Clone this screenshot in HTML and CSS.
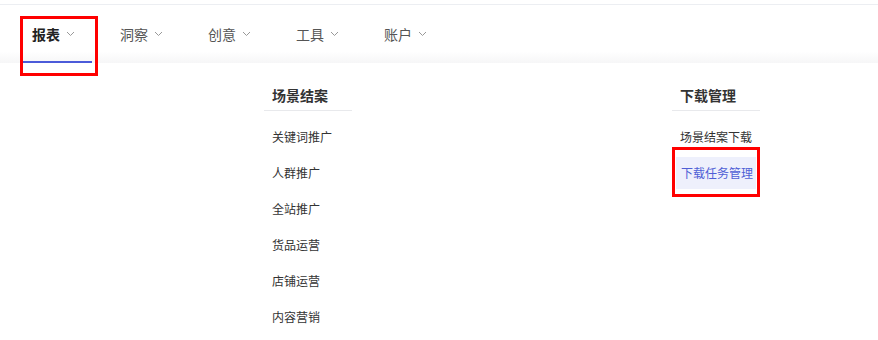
FILE: index.html
```html
<!DOCTYPE html>
<html lang="zh-CN">
<head>
  <meta charset="UTF-8">
  <meta name="viewport" content="width=device-width, initial-scale=1.0">
  <title>报表</title>
  <link rel="stylesheet" href="styles.css">
</head>
<body>

<div class="topline"></div>

<div class="nav">
  <div class="nav-item active">
    <span>报表</span>
    <svg class="arrow" width="9" height="6" viewBox="0 0 9 6"><path d="M1 1l3.5 3.5L8 1" fill="none" stroke="#999" stroke-width="1"/></svg>
    <span class="mark mark-nav"></span>
  </div>
  <div class="nav-item">
    <span>洞察</span>
    <svg class="arrow" width="9" height="6" viewBox="0 0 9 6"><path d="M1 1l3.5 3.5L8 1" fill="none" stroke="#999" stroke-width="1"/></svg>
  </div>
  <div class="nav-item">
    <span>创意</span>
    <svg class="arrow" width="9" height="6" viewBox="0 0 9 6"><path d="M1 1l3.5 3.5L8 1" fill="none" stroke="#999" stroke-width="1"/></svg>
  </div>
  <div class="nav-item">
    <span>工具</span>
    <svg class="arrow" width="9" height="6" viewBox="0 0 9 6"><path d="M1 1l3.5 3.5L8 1" fill="none" stroke="#999" stroke-width="1"/></svg>
  </div>
  <div class="nav-item">
    <span>账户</span>
    <svg class="arrow" width="9" height="6" viewBox="0 0 9 6"><path d="M1 1l3.5 3.5L8 1" fill="none" stroke="#999" stroke-width="1"/></svg>
  </div>
</div>

<div class="menu">
  <div class="group">
    <div class="group-title">场景结案</div>
    <div class="group-item">关键词推广</div>
    <div class="group-item">人群推广</div>
    <div class="group-item">全站推广</div>
    <div class="group-item">货品运营</div>
    <div class="group-item">店铺运营</div>
    <div class="group-item">内容营销</div>
  </div>

  <div class="group">
    <div class="group-title">下载管理</div>
    <div class="group-item">场景结案下载</div>
    <div class="group-item selected">
      下载任务管理
      <span class="mark mark-item"></span>
    </div>
  </div>
</div>

</body>
</html>
```

FILE: styles.css
```css
body {
  margin: 0;
  padding: 0;
  background-color: #fff;
  font-family: "Noto Sans CJK SC", "Noto Sans", sans-serif;
  color: #333;
}

.topline {
  height: 4px;
  border-bottom: 1px solid #eceef2;
}

.nav {
  display: flex;
  gap: 18px;
  height: 58px;
  padding-left: 22px;
  background: linear-gradient(to bottom, #fff 80%, #f6f6f7 100%);
}

.nav-item {
  position: relative;
  display: flex;
  align-items: center;
  gap: 6px;
  width: 70px;
  box-sizing: border-box;
  padding-left: 10px;
  padding-top: 2px;
  border-bottom: 2px solid transparent;
  font-size: 14px;
  color: #555;
}

.nav-item.active {
  font-weight: bold;
  color: #222;
  border-bottom-color: #4b5bd9;
}

.menu {
  display: flex;
  gap: 320px;
  padding-left: 264px;
  padding-top: 22px;
}

.group {
  width: 88px;
}

.group-title {
  font-size: 14px;
  font-weight: bold;
  line-height: 20px;
  padding: 0 8px 5px;
  border-bottom: 1px solid #e8e9ec;
  margin-bottom: 10px;
  color: #333;
  white-space: nowrap;
}

.group-item {
  position: relative;
  font-size: 12px;
  line-height: 32px;
  padding-left: 8px;
  margin-bottom: 4px;
  color: #333;
  white-space: nowrap;
}

.group-item.selected {
  margin: 0 4px 4px;
  padding-left: 5px;
  background-color: #eef0fc;
  color: #4f5fd6;
}

.mark {
  position: absolute;
  border: 3px solid #f00;
  box-sizing: border-box;
}

.mark-nav {
  left: -2px;
  top: 11px;
  width: 78px;
  height: 60px;
}

.mark-item {
  left: -4px;
  top: -10px;
  width: 88px;
  height: 50px;
}
```
